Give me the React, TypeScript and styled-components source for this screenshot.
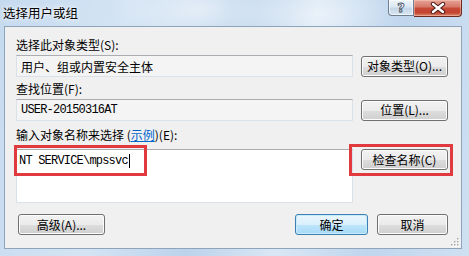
import React from 'react'
import styled, { createGlobalStyle } from 'styled-components'

const GlobalStyle = createGlobalStyle`
  html, body {
    margin: 0;
    padding: 0;
  }
  body {
    width: 469px;
    height: 256px;
    overflow: hidden;
    background: #c9dcf0;
    font-family: "Noto Sans CJK SC", "Liberation Sans", sans-serif;
  }
`

export default function App() {
  return (
    <>
      <GlobalStyle />
      <Window>
        <TitleBar>
          <Title>选择用户或组</Title>
          <CaptionButtons>
            <HelpButton>?</HelpButton>
            <CloseButton>
              <svg width='16' height='12' viewBox='0 0 16 12'>
                <path d='M3 2 L13 10 M13 2 L3 10' stroke='#4a1c16' strokeWidth='4.4' strokeLinecap='round' />
                <path d='M3 2 L13 10 M13 2 L3 10' stroke='#ffffff' strokeWidth='2.4' strokeLinecap='round' />
              </svg>
            </CloseButton>
          </CaptionButtons>
        </TitleBar>
        <Frame>
          <Client>
            <Form>
              <Label $top={11}>选择此对象类型(S):</Label>
              <Field>用户、组或内置安全主体</Field>
              <Button>对象类型(O)...</Button>

              <Label $top={5}>查找位置(F):</Label>
              <Field $mono>USER-20150316AT</Field>
              <Button>位置(L)...</Button>

              <Label $top={7}>
                输入对象名称来选择 (<Link>示例</Link>)(E):
              </Label>
              <Names>
                <Typed>
                  NT SERVICE\mpssvc<Caret />
                </Typed>
                <Mark $inset='-5px auto auto -3px' $w={133} $h={31} />
              </Names>
              <CheckSlot>
                <Button>检查名称(C)</Button>
                <Mark $inset='-5px -5px -6px -12px' />
              </CheckSlot>

              <Footer>
                <Button $w={87} $left={2}>高级(A)...</Button>
                <Actions>
                  <Button $w={73} $primary>确定</Button>
                  <Button $w={71}>取消</Button>
                </Actions>
              </Footer>
            </Form>
            <Grip viewBox='0 0 10 10' width='10' height='10'>
              {[
                [8, 2],
                [5, 5],
                [8, 5],
                [2, 8],
                [5, 8],
                [8, 8],
              ].map(([x, y]) => (
                <g key={`${x}-${y}`}>
                  <rect x={x} y={y} width='1.5' height='1.5' fill='#ffffff' />
                  <rect x={x - 1} y={y - 1} width='1.5' height='1.5' fill='#a7a7a7' />
                </g>
              ))}
            </Grip>
          </Client>
        </Frame>
      </Window>
    </>
  )
}

const Window = styled.div`
  width: 469px;
  height: 256px;
  display: flex;
  flex-direction: column;
  background:
    radial-gradient(ellipse 90px 40px at 200px 10px, rgba(255, 255, 255, 0.55), transparent),
    radial-gradient(ellipse 70px 30px at 320px 14px, rgba(255, 255, 255, 0.45), transparent),
    linear-gradient(100deg, #c6daef 0%, #d4e4f4 25%, #bcd3eb 45%, #d9e7f5 62%, #c0d6ed 80%, #cfe0f2 100%);
`

const TitleBar = styled.div`
  height: 26px;
  display: flex;
  align-items: flex-start;
`

const Title = styled.div`
  padding: 5px 0 0 3px;
  font-size: 12.5px;
  line-height: 16px;
  color: #000;
  text-shadow: 0 0 6px rgba(255, 255, 255, 0.95), 0 0 3px rgba(255, 255, 255, 0.9);
`

const CaptionButtons = styled.div`
  margin-left: auto;
  margin-right: 7px;
  display: flex;
  height: 17px;
`

const HelpButton = styled.div`
  width: 26px;
  height: 16px;
  box-sizing: border-box;
  border: 1px solid #6f7f92;
  border-top: none;
  border-radius: 0 0 0 4px;
  background: linear-gradient(#eef4fa 0%, #dce8f4 45%, #c5d6e8 55%, #d9e6f2 100%);
  box-shadow: inset 0 0 0 1px rgba(255, 255, 255, 0.6);
  font-family: "DejaVu Sans", sans-serif;
  font-size: 13px;
  font-weight: bold;
  line-height: 15px;
  text-align: center;
  color: #ffffff;
  -webkit-text-stroke: 0.8px #3d4c5e;
`

const CloseButton = styled.div`
  width: 48px;
  height: 17px;
  box-sizing: border-box;
  border: 1px solid #6a2a22;
  border-left: none;
  border-top: none;
  border-radius: 0 0 4px 0;
  background: linear-gradient(#e6a397 0%, #d6796b 42%, #c74a36 52%, #c3432f 78%, #d9876d 100%);
  box-shadow: inset 0 0 0 1px rgba(255, 210, 200, 0.45);
  display: flex;
  align-items: center;
  justify-content: center;
`

const Frame = styled.div`
  flex: 1;
  padding: 0 7px 7px 4px;
  display: flex;
`

const Client = styled.div`
  flex: 1;
  position: relative;
  box-sizing: border-box;
  border: 1px solid #8ea4bb;
  background: #f0f0f0;
  padding: 0 13px 0 11px;
`

const Form = styled.div`
  display: grid;
  grid-template-columns: 337px 87px;
  column-gap: 8px;
  align-items: center;
`

const Label = styled.div<{ $top: number }>`
  grid-column: 1 / -1;
  margin-top: ${(p) => p.$top}px;
  margin-bottom: 3px;
  font-size: 12px;
  line-height: 14px;
  color: #000;
`

const Link = styled.span`
  color: #0066cc;
  text-decoration: underline;
`

const Field = styled.div<{ $mono?: boolean }>`
  height: 22px;
  box-sizing: border-box;
  border: 1px solid #dbe1e8;
  border-top-color: #abadb3;
  background: #f4f4f4;
  padding: 0 4px;
  display: flex;
  align-items: center;
  font-family: ${(p) =>
    p.$mono ? '"Liberation Mono", monospace' : '"Noto Sans CJK SC", sans-serif'};
  font-size: 12px;
  letter-spacing: ${(p) => (p.$mono ? '-0.8px' : '0')};
  color: #000;
`

const Button = styled.div<{ $w?: number; $left?: number; $primary?: boolean }>`
  width: ${(p) => (p.$w ? `${p.$w}px` : '100%')};
  height: 21px;
  margin-left: ${(p) => p.$left ?? 0}px;
  box-sizing: border-box;
  border: 1px solid ${(p) => (p.$primary ? '#3c7fb1' : '#707070')};
  border-radius: 3px;
  background: ${(p) =>
    p.$primary
      ? 'linear-gradient(#eaf6fd 0%, #d9f0fc 50%, #bee6fd 51%, #a7d9f5 100%)'
      : 'linear-gradient(#f2f2f2 0%, #ebebeb 50%, #dddddd 51%, #cfcfcf 100%)'};
  box-shadow: inset 0 0 0 1px ${(p) => (p.$primary ? '#c9ecfd' : '#fcfcfc')};
  display: flex;
  align-items: center;
  justify-content: center;
  font-size: 12px;
  line-height: 14px;
  color: #000;
  white-space: nowrap;
`

const Names = styled.div`
  position: relative;
  margin-top: 4px;
  height: 54px;
  box-sizing: border-box;
  border: 1px solid #dbe1e8;
  border-top-color: #abadb3;
  background: #ffffff;
  padding: 4px 2px;
`

const Typed = styled.div`
  font-family: "Liberation Mono", monospace;
  font-size: 12px;
  letter-spacing: -0.8px;
  line-height: 14px;
  color: #000;
  display: flex;
  align-items: center;
`

const Caret = styled.span`
  display: inline-block;
  width: 1px;
  height: 14px;
  margin-left: 1px;
  background: #000;
`

const CheckSlot = styled.div`
  position: relative;
  align-self: start;
  margin-top: 4px;
`

const Mark = styled.div<{ $inset: string; $w?: number; $h?: number }>`
  position: absolute;
  inset: ${(p) => p.$inset};
  ${(p) => (p.$w ? `width: ${p.$w}px;` : '')}
  ${(p) => (p.$h ? `height: ${p.$h}px;` : '')}
  box-sizing: border-box;
  border: 3px solid #e03a3f;
  pointer-events: none;
`

const Footer = styled.div`
  grid-column: 1 / -1;
  margin-top: 11px;
  display: flex;
  justify-content: space-between;
  align-items: center;
`

const Actions = styled.div`
  display: flex;
  gap: 9px;
`

const Grip = styled.svg`
  position: absolute;
  right: 1px;
  bottom: 1px;
`
